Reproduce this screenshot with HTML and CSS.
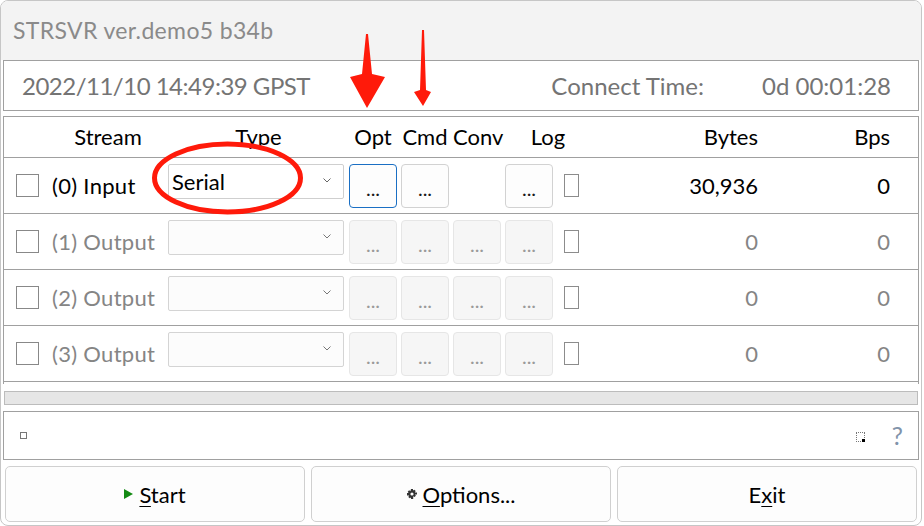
FILE: index.html
```html
<!DOCTYPE html>
<html>
<head>
<meta charset="utf-8">
<link rel="stylesheet" href="styles.css">
</head>
<body>
<div class="window">
  <div class="titlebar">STRSVR ver.demo5 b34b</div>
  <div class="status">
    <span class="time">2022/11/10 14:49:39 GPST</span>
    <span class="ct-label">Connect Time:</span>
    <span class="ct-value">0d 00:01:28</span>
  </div>
  <div class="streams">
    <div class="hdr">
      <span class="h-stream">Stream</span>
      <span class="h-type">Type</span>
      <span class="h-btn">Opt</span>
      <span class="h-btn gap">Cmd</span>
      <span class="h-btn gap">Conv</span>
      <span class="h-log">Log</span>
      <span class="h-bytes">Bytes</span>
      <span class="h-bps">Bps</span>
    </div>
    <div class="row">
      <span class="cb"></span>
      <span class="label">(0) Input</span>
      <span class="combo"><span class="combo-text">Serial</span><svg class="chev" width="8" height="5" viewBox="0 0 8 5"><path d="M0.5 0.5 L4 4 L7.5 0.5" fill="none" stroke="#666" stroke-width="1"/></svg></span>
      <span class="btn focus">...</span>
      <span class="btn">...</span>
      <span class="btn hidden"></span>
      <span class="btn">...</span>
      <span class="logcb"></span>
      <span class="bytes">30,936</span>
      <span class="bps">0</span>
    </div>
    <div class="row off">
      <span class="cb"></span>
      <span class="label">(1) Output</span>
      <span class="combo"><span class="combo-text"></span><svg class="chev" width="8" height="5" viewBox="0 0 8 5"><path d="M0.5 0.5 L4 4 L7.5 0.5" fill="none" stroke="#777" stroke-width="1"/></svg></span>
      <span class="btn">...</span>
      <span class="btn">...</span>
      <span class="btn">...</span>
      <span class="btn">...</span>
      <span class="logcb"></span>
      <span class="bytes">0</span>
      <span class="bps">0</span>
    </div>
    <div class="row off">
      <span class="cb"></span>
      <span class="label">(2) Output</span>
      <span class="combo"><span class="combo-text"></span><svg class="chev" width="8" height="5" viewBox="0 0 8 5"><path d="M0.5 0.5 L4 4 L7.5 0.5" fill="none" stroke="#777" stroke-width="1"/></svg></span>
      <span class="btn">...</span>
      <span class="btn">...</span>
      <span class="btn">...</span>
      <span class="btn">...</span>
      <span class="logcb"></span>
      <span class="bytes">0</span>
      <span class="bps">0</span>
    </div>
    <div class="row off">
      <span class="cb"></span>
      <span class="label">(3) Output</span>
      <span class="combo"><span class="combo-text"></span><svg class="chev" width="8" height="5" viewBox="0 0 8 5"><path d="M0.5 0.5 L4 4 L7.5 0.5" fill="none" stroke="#777" stroke-width="1"/></svg></span>
      <span class="btn">...</span>
      <span class="btn">...</span>
      <span class="btn">...</span>
      <span class="btn">...</span>
      <span class="logcb"></span>
      <span class="bytes">0</span>
      <span class="bps">0</span>
    </div>
  </div>
  <div class="progress"></div>
  <div class="msg">
    <span class="sq"></span>
    <span class="msg-fill"></span>
    <span class="dotsq"><span class="dotsq-dot"></span></span>
    <span class="help">?</span>
  </div>
  <div class="actions">
    <div class="abtn"><svg class="play" width="9" height="10" viewBox="0 0 9 10"><path d="M0 0 L9 5 L0 10 Z" fill="#138a13"/></svg><span><u>S</u>tart</span></div>
    <div class="abtn"><svg class="gear" width="10" height="10" viewBox="0 0 10 10"><path d="M4 0h2v1.6l1.3-.9 1.4 1.4-.9 1.3H10v2H8.4l-.4 0 .9 1.3-1.4 1.4-1.3-.9V10H4V8.4l-1.3.9-1.4-1.4.9-1.3H0V4h1.6l-.9-1.3 1.4-1.4 1.3.9Z" fill="#333"/><circle cx="5" cy="5" r="1.6" fill="#fff"/></svg><span><u>O</u>ptions...</span></div>
    <div class="abtn"><span>E<u>x</u>it</span></div>
  </div>
</div>
<svg class="annot" width="924" height="526" viewBox="0 0 924 526">
  <ellipse cx="227.5" cy="178" rx="73" ry="34" fill="none" stroke="#ff1a0a" stroke-width="5"/>
  <polygon points="366,34 368,34 372,74 385,77 367,108 350,77 362,74" fill="#ff1a0a"/>
  <polygon points="422,30 424,30 426,90 431,92 423,106 414,92 420,90" fill="#ff1a0a"/>
</svg>
</body>
</html>
```
FILE: styles.css
```css
* { box-sizing: border-box; }
html, body { margin: 0; padding: 0; }
body {
  position: relative;
  width: 924px;
  height: 526px;
  overflow: hidden;
  background: #ffffff;
  font-family: "Lato", "Noto Sans", sans-serif;
  font-size: 22px;
  color: #000;
}
.window {
  width: 922px;
  height: 526px;
  border: 1px solid #c6c6c6;
  border-radius: 8px;
  background: #fff;
  overflow: hidden;
}
.titlebar {
  height: 59px;
  line-height: 59px;
  padding-left: 12px;
  background: #f3f3f3;
  color: #8a8a8a;
  font-size: 23px;
  letter-spacing: 0.35px;
}
.status {
  margin: 0 2px;
  height: 51px;
  border: 1px solid #a0a0a0;
  display: flex;
  align-items: center;
  padding: 0 27px 0 18px;
  color: #747474;
  font-size: 24px;
}
.status .time { flex: 1; letter-spacing: -0.5px; }
.status .ct-label { margin-right: 58px; }
.streams {
  margin: 5px 2px 0 2px;
  height: 268px;
  border: 1px solid #a0a0a0;
  border-bottom: none;
}
.hdr {
  height: 41px;
  border-bottom: 1px solid #a0a0a0;
  display: flex;
  align-items: center;
  padding-left: 44px;
  line-height: 40px;
}
.hdr span { text-align: center; flex: none; }
.h-stream { width: 120px; }
.h-type { width: 181px; }
.h-btn { width: 48px; }
.h-btn.gap { margin-left: 4px; }
.h-log { width: 94px; }
.hdr .h-bytes { width: 163px; text-align: right; }
.hdr .h-bps { width: 132px; text-align: right; }
.row {
  height: 56px;
  border-bottom: 1px solid #a0a0a0;
  display: flex;
  align-items: center;
  padding-left: 12px;
}
.cb {
  flex: none;
  width: 23px;
  height: 23px;
  border: 1px solid #888;
  background: #fff;
}
.label {
  flex: none;
  width: 116px;
  margin-left: 13px;
  white-space: nowrap;
  letter-spacing: 0.3px;
}
.combo {
  flex: none;
  align-self: flex-start;
  margin-top: 6px;
  width: 176px;
  height: 35px;
  border: 1px solid #cfcfcf;
  border-radius: 2px;
  background: #fff;
  display: flex;
  align-items: center;
  padding: 0 12px 0 3px;
}
.combo-text { flex: 1; }
.chev { flex: none; margin-top: -2px; }
.btn {
  flex: none;
  width: 48px;
  height: 44px;
  margin-left: 4px;
  border: 1px solid #d2d2d2;
  border-radius: 4px;
  background: #fdfdfd;
  display: flex;
  align-items: center;
  justify-content: center;
  padding-top: 4px;
  font-size: 20px;
  color: #1a1a1a;
}
.combo + .btn { margin-left: 5px; }
.btn.focus { border-color: #1a6fc4; }
.btn.hidden { visibility: hidden; }
.logcb {
  flex: none;
  width: 15px;
  height: 23px;
  margin-left: 11px;
  border: 1px solid #8c8c8c;
  background: #fff;
}
.bytes { flex: none; width: 179px; text-align: right; }
.bps { flex: none; width: 132px; text-align: right; }
.row.off { color: #858585; }
.row.off .combo { background: #fcfcfc; border-color: #d4d4d4; }
.row.off .btn {
  background: #f6f6f6;
  border-color: #e6e6e6;
  color: #9a9a9a;
}
.progress {
  margin: 7px 3px 0 3px;
  height: 14px;
  background: #e6e6e6;
  border: 1px solid #bcbcbc;
}
.msg {
  margin: 6px 2px 0 2px;
  height: 49px;
  border: 1px solid #a0a0a0;
  display: flex;
  align-items: center;
  padding: 0 15px 0 16px;
}
.sq {
  width: 7px;
  height: 7px;
  border: 1px solid #777;
}
.msg-fill { flex: 1; }
.dotsq {
  position: relative;
  width: 9px;
  height: 10px;
  border: 1px dotted #777;
  margin-top: 3px;
}
.dotsq-dot {
  position: absolute;
  right: -1px;
  bottom: -1px;
  width: 3px;
  height: 3px;
  background: #000;
}
.help {
  margin-left: 27px;
  color: #8193aa;
  font-size: 25px;
  line-height: 1;
}
.actions {
  margin-top: 6px;
  padding-left: 4px;
  display: flex;
  gap: 6px;
}
.abtn {
  width: 300px;
  height: 56px;
  border: 1px solid #d0d0d0;
  border-radius: 5px;
  background: #fdfdfd;
  display: flex;
  align-items: center;
  justify-content: center;
  gap: 6px;
}
.abtn u { text-decoration-thickness: 1px; text-underline-offset: 3px; }
.play { flex: none; }
.gear { flex: none; }
.annot {
  position: absolute;
  left: 0;
  top: 0;
  pointer-events: none;
}
```
